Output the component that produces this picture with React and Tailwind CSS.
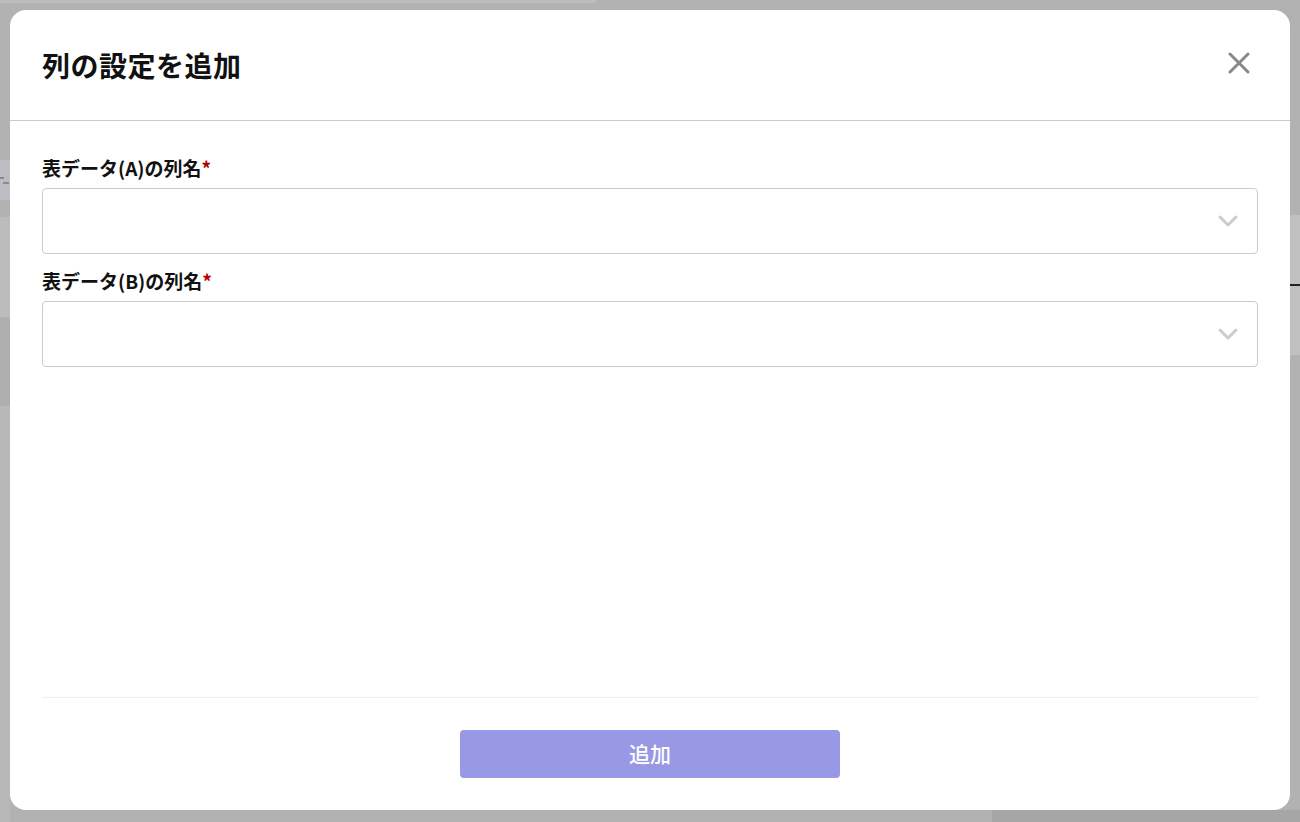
import React from 'react';

const font = { fontFamily: '"Noto Sans CJK JP", "Noto Sans", sans-serif' };

const Chevron = () => (
  <svg width="20" height="12" viewBox="0 0 20 12" fill="none">
    <path d="M2 2l8 8 8-8" stroke="#cccccc" strokeWidth="3" strokeLinecap="round" strokeLinejoin="round" />
  </svg>
);

const SelectField = ({ label }) => (
  <div className="flex flex-col gap-[8px]">
    <label className="text-[19px] leading-[24px] font-bold text-[#111]">
      {label}
      <span className="text-[#b00000]">*</span>
    </label>
    <div className="h-[66px] border border-[#cccccc] rounded-[4px] bg-white flex items-center justify-end pr-[19px]">
      <Chevron />
    </div>
  </div>
);

export default function App() {
  return (
    <div className="relative w-[1300px] h-[822px] overflow-hidden bg-[#b2b2b2]" style={font}>
      {/* page behind overlay */}
      <div className="absolute left-0 top-0 w-[596px] h-[3px] bg-[#bdbdbd]" />
      <div className="absolute left-0 top-[160px] w-[10px] h-[40px] bg-[#bcbdc2] flex flex-col justify-center gap-[3px]">
        <div className="w-[4px] h-[2px] bg-[#8a8a90]" />
        <div className="w-[6px] h-[2px] ml-[3px] bg-[#8a8a90]" />
      </div>
      <div className="absolute left-0 top-[217px] w-[10px] h-[100px] bg-[#bcbcbc]" />
      <div className="absolute left-0 top-[318px] w-[10px] h-[88px] bg-[#afafaf]" />
      <div className="absolute left-0 top-[406px] w-[10px] h-[416px] bg-[#b8b8b8]" />
      <div className="absolute right-0 top-[215px] w-[10px] h-[140px] bg-[#c0c0c0]" />
      <div className="absolute right-0 top-[284px] w-[10px] h-[2px] bg-[#222]" />
      <div className="absolute left-[992px] top-[810px] w-[308px] h-[12px] bg-[#a6a6a6]" />

      {/* modal */}
      <div className="absolute left-[10px] top-[10px] w-[1280px] h-[800px] bg-white rounded-[16px] flex flex-col">
        <div className="h-[111px] px-[32px] flex items-center justify-between border-b border-[#cccccc]">
          <h2 className="text-[28px] font-bold text-[#111] tracking-[0.5px]">列の設定を追加</h2>
          <button className="w-[26px] h-[26px] mr-[6px] flex items-center justify-center -mt-[4px]">
            <svg width="22" height="22" viewBox="0 0 22 22" fill="none">
              <path d="M2 2l18 18M20 2L2 20" stroke="#888888" strokeWidth="3" strokeLinecap="round" />
            </svg>
          </button>
        </div>

        <div className="flex-1 px-[32px] pt-[35px] flex flex-col gap-[15px]">
          <SelectField label="表データ(A)の列名" />
          <SelectField label="表データ(B)の列名" />
        </div>

        <div className="mx-[32px] border-t border-[#eeeeee] py-[32px] flex justify-center">
          <button className="w-[380px] h-[48px] rounded-[4px] bg-[#9898e4] text-white text-[21px] font-medium">
            追加
          </button>
        </div>
      </div>
    </div>
  );
}
